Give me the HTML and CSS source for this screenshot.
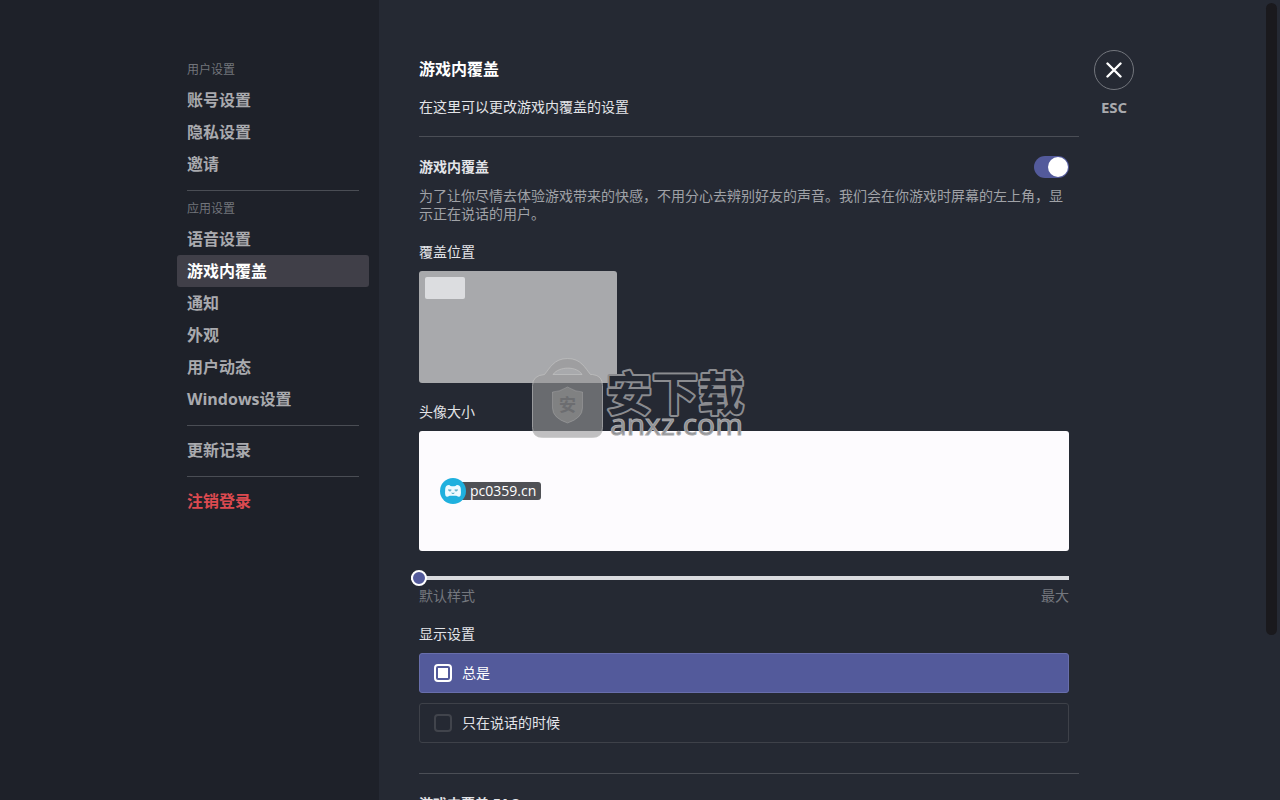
FILE: index.html
```html
<!DOCTYPE html>
<html lang="zh-CN">
<head>
<meta charset="utf-8">
<meta name="viewport" content="width=device-width, initial-scale=1">
<title>游戏内覆盖</title>
<link rel="stylesheet" href="styles.css">
</head>
<body>
<div class="shell">
  <aside class="sidebar">
    <nav class="nav">
      <h2 class="nav-label">用户设置</h2>
      <a class="nav-item" href="#account">账号设置</a>
      <a class="nav-item" href="#privacy">隐私设置</a>
      <a class="nav-item" href="#invite">邀请</a>
      <hr class="nav-rule">
      <h2 class="nav-label">应用设置</h2>
      <a class="nav-item" href="#voice">语音设置</a>
      <a class="nav-item is-active" href="#overlay" aria-current="page">游戏内覆盖</a>
      <a class="nav-item" href="#notify">通知</a>
      <a class="nav-item" href="#look">外观</a>
      <a class="nav-item" href="#activity">用户动态</a>
      <a class="nav-item" href="#windows">Windows设置</a>
      <hr class="nav-rule">
      <a class="nav-item" href="#changes">更新记录</a>
      <hr class="nav-rule">
      <a class="nav-item is-danger" href="#logout">注销登录</a>
    </nav>
  </aside>

  <main class="main">
    <div class="panel">
      <header class="intro">
        <h1 class="title">游戏内覆盖</h1>
        <p class="lead">在这里可以更改游戏内覆盖的设置</p>
      </header>
      <hr class="rule">
      <section class="section">
        <div class="switch-row">
          <label class="heading" for="overlay-switch">游戏内覆盖</label>
          <input class="switch" id="overlay-switch" type="checkbox" role="switch" checked>
        </div>
        <p class="note">为了让你尽情去体验游戏带来的快感，不用分心去辨别好友的声音。我们会在你游戏时屏幕的左上角，显示正在说话的用户。</p>

        <h3 class="subheading">覆盖位置</h3>
        <div class="screen"><div class="screen-slot"></div></div>

        <h3 class="subheading" id="size-title">头像大小</h3>
        <div class="preview">
          <svg class="avatar" viewBox="0 0 26 26" aria-hidden="true">
            <circle cx="13" cy="13" r="13" fill="#1fb0de"/>
            <path d="M7.500 7.200Q9.500 6.400 10.500 8Q13 8.600 15.500 8Q16.500 6.400 18.500 7.200Q20.500 7.600 20.800 11Q21.200 15 20.600 17.400Q19.800 19.200 17.800 18.600Q16.800 17.600 15.800 17.800H10.200Q9.200 17.600 8.200 18.600Q6.200 19.200 5.400 17.400Q4.800 15 5.200 11Q5.500 7.600 7.500 7.200Z" fill="#eefaff"/>
            <path d="M8 12H11.400M14.600 12H18M9 12.800H10.800M15.200 12.800H17M11.600 15Q13 16 14.400 15" fill="none" stroke="#4aa5c2" stroke-width="1"/>
          </svg>
          <span class="name-tag">pc0359.cn</span>
        </div>
        <input class="slider" type="range" min="0" max="100" value="0" aria-labelledby="size-title">
        <div class="slider-ends"><span>默认样式</span><span>最大</span></div>

        <fieldset class="options">
          <legend class="subheading">显示设置</legend>
          <label class="option"><input class="mark" type="radio" name="show" checked><span>总是</span></label>
          <label class="option"><input class="mark" type="radio" name="show"><span>只在说话的时候</span></label>
        </fieldset>
      </section>
      <hr class="rule rule-late">
      <section class="section">
        <h2 class="heading">游戏内覆盖 FAQ</h2>
      </section>
    </div>

    <div class="close">
      <button class="close-button" type="button" aria-label="关闭" aria-describedby="close-key">
        <svg class="close-icon" viewBox="0 0 16 16" aria-hidden="true"><path d="M1.500 1.500L14.500 14.500M14.500 1.500L1.500 14.500" fill="none" stroke="#fff" stroke-width="2.400" stroke-linecap="round"/></svg>
      </button>
      <span class="close-key" id="close-key">ESC</span>
    </div>
  </main>
  <div class="scroll-thumb"></div>

  <svg class="watermark" viewBox="0 0 216 86" aria-hidden="true">
    <g stroke="#c4c4c4" stroke-opacity=".65" fill="#989898" fill-opacity=".6">
      <path fill-rule="evenodd" d="M13.500 18.500C19 12 23 2.500 36.500 2.500S54 12 59.500 18.500H61.500Q71.500 19.500 71.500 29.500V71.500Q71.500 81.500 61.500 81.500H11.500Q1.500 81.500 1.500 71.500V29.500Q1.500 19.500 13.500 18.500ZM22 18.500H51C46 10 28 10 22 18.500Z"/>
      <path d="M36.500 31Q28 36 21.500 36V52Q21.500 62 36.500 67Q51.500 62 51.500 52V36Q45 36 36.500 31Z" fill="#909090" stroke-opacity=".3"/>
    </g>
    <text class="wm-seal" x="28" y="55">安</text>
    <text class="wm-name" x="75" y="54">安下载</text>
    <text class="wm-site" x="79" y="79">anxz.com</text>
  </svg>
</div>
</body>
</html>
```
FILE: styles.css
```css
* { box-sizing: border-box; }

body {
  margin: 0;
  background: #252933;
  color: #e3e4e8;
  font: 14px/18px "Open Sans", "Noto Sans CJK SC", sans-serif;
}

h1, h2, h3, p { margin: 0; }

.shell {
  position: relative;
  display: flex;
  height: 100vh;
  overflow: hidden;
}

/* Sidebar */
.sidebar {
  flex: 0 0 379px;
  display: flex;
  justify-content: flex-end;
  padding: 60px 10px 0 0;
  background: #1e2129;
}
.nav { width: 192px; }
.nav-label {
  height: 24px;
  padding-left: 10px;
  color: #72757b;
  font-size: 12px;
  font-weight: 400;
  line-height: 20px;
}
.nav-item {
  display: block;
  padding-left: 10px;
  border-radius: 3px;
  color: #a9aaae;
  font-size: 16px;
  font-weight: 700;
  line-height: 32px;
  text-decoration: none;
}
.nav-item.is-active { background: #403f48; color: #fff; }
.nav-item.is-danger { color: #dc4a50; }
.nav-rule {
  height: 1px;
  margin: 10px 10px 8px;
  border: 0;
  background: #4a4d54;
}

/* Content */
.main {
  flex: 1;
  display: flex;
  align-items: flex-start;
  gap: 15px;
  min-width: 0;
  padding: 50px 40px 0;
  overflow-y: auto;
  scrollbar-width: none;
}
.panel {
  flex: 0 1 660px;
  min-width: 0;
  padding: 10px 0 60px;
}
.title {
  color: #fff;
  font-size: 16px;
  line-height: 18px;
}
.lead { margin-top: 20px; }
.rule {
  height: 1px;
  margin: 20px 0;
  border: 0;
  background: #4b4e56;
}
.rule-late { margin-top: 30px; }
.section { padding-right: 10px; }
.heading {
  font-size: 14px;
  font-weight: 700;
  line-height: 20px;
}
.switch-row {
  display: flex;
  align-items: center;
  justify-content: space-between;
  height: 20px;
}
.switch {
  appearance: none;
  width: 35px;
  height: 22px;
  margin: 0;
  padding: 1px;
  border-radius: 11px;
  background: #535a9b;
}
.switch::before {
  content: "";
  display: block;
  width: 20px;
  height: 20px;
  border-radius: 50%;
  background: #fff;
}
.switch:checked::before { margin-left: auto; }
.note {
  margin-top: 10px;
  color: #a0a2a7;
}
.subheading {
  padding: 0;
  margin: 20px 0 10px;
  font-size: 14px;
  font-weight: 400;
}
.screen {
  width: 198px;
  height: 112px;
  padding: 6px;
  border-radius: 3px;
  background: #a8a9ac;
}
.screen-slot {
  width: 40px;
  height: 22px;
  border-radius: 2px;
  background: #dcdde0;
}
.preview {
  display: flex;
  align-items: center;
  height: 120px;
  padding-left: 21px;
  border-radius: 3px;
  background: #fdfbfe;
}
.avatar {
  z-index: 1;
  width: 26px;
  height: 26px;
}
.name-tag {
  margin-left: -8px;
  padding: 0 5px 0 12px;
  border-radius: 3px;
  background: #505156;
  color: #fff;
}
.slider {
  appearance: none;
  display: block;
  width: calc(100% + 8px);
  height: 16px;
  margin: 19px 0 0 -8px;
  background: linear-gradient(#dadbdf, #dadbdf) center / 100% 4px no-repeat;
}
.slider::-webkit-slider-thumb {
  appearance: none;
  width: 16px;
  height: 16px;
  border: 2px solid #fff;
  border-radius: 50%;
  background: #535a9b;
}
.slider-ends {
  display: flex;
  justify-content: space-between;
  margin-top: 1px;
  color: #74777e;
}
.options {
  display: grid;
  gap: 10px;
  margin: 20px 0 0;
  padding: 0;
  border: 0;
}
.options .subheading { margin: 0 0 10px; }
.option {
  display: flex;
  align-items: center;
  gap: 10px;
  height: 40px;
  padding: 0 14px;
  border: 1px solid #3e4149;
  border-radius: 3px;
}
.option:has(:checked) {
  border-color: #686eab;
  background: #535a9b;
  color: #fff;
}
.mark {
  appearance: none;
  width: 18px;
  height: 18px;
  margin: 0;
  padding: 2px;
  border: 2px solid #41444c;
  border-radius: 4px;
}
.mark:checked {
  border-color: #fff;
  background: #fff content-box;
}

/* Close button */
.close {
  flex: 0 0 40px;
  display: flex;
  flex-direction: column;
  align-items: center;
  gap: 8px;
}
.close-button {
  display: grid;
  place-items: center;
  width: 40px;
  height: 40px;
  padding: 0;
  border: 1px solid #73767d;
  border-radius: 50%;
  background: none;
}
.close-icon { width: 16px; height: 16px; }
.close-key {
  color: #a9aaae;
  font-size: 15px;
  font-weight: 700;
}

.scroll-thumb {
  position: absolute;
  top: 3px;
  right: 3px;
  width: 11px;
  height: 79vh;
  border-radius: 6px;
  background: #1a191d;
}

/* Watermark */
.watermark {
  position: absolute;
  top: 356px;
  left: 531px;
  width: 216px;
  height: 86px;
  pointer-events: none;
}
.watermark text { font-family: "Open Sans", "Noto Sans CJK SC", sans-serif; }
.wm-seal { fill: #6c6d70; font-size: 17px; font-weight: 700; }
.wm-name {
  fill: #252933;
  stroke: #8b8c90;
  stroke-width: 4px;
  stroke-linejoin: round;
  paint-order: stroke;
  font-size: 46px;
  font-weight: 700;
}
.wm-site {
  fill: #8b8c8f;
  stroke: #a9a9ac;
  stroke-width: 1px;
  font-size: 30px;
}
```
